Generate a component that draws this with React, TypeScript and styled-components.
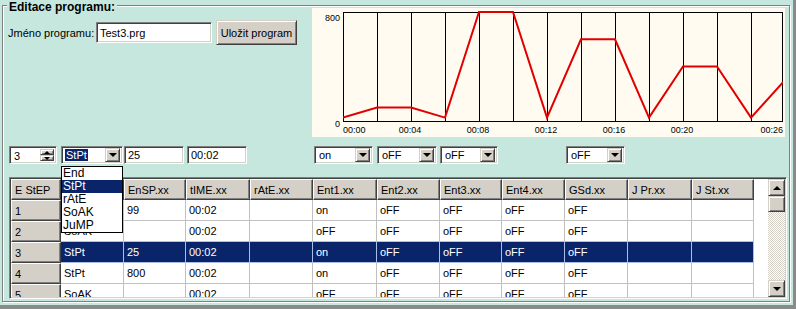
import React from "react";
import styled, { createGlobalStyle, css } from "styled-components";

const MINT = "#c6e7dd";
const FACE = "#d4d0c8";
const NAVY = "#0a246a";

const Global = createGlobalStyle`
  html, body { margin: 0; padding: 0; background: ${MINT}; }
  body { font-family: "Liberation Sans", Arial, sans-serif; font-size: 11px; color: #000; }
  * { box-sizing: border-box; }
`;

const raised = css`
  background: ${FACE};
  border: 1px solid;
  border-color: ${FACE} #404040 #404040 ${FACE};
  box-shadow: inset 1px 1px 0 #fff, inset -1px -1px 0 #808080;
`;

const sunken = css`
  background: #fff;
  border: 1px solid;
  border-color: #808080 #fff #fff #808080;
  box-shadow: inset 1px 1px 0 #404040, inset -1px -1px 0 ${FACE};
`;

const Window = styled.div`
  width: 796px;
  height: 309px;
  background: ${MINT};
  overflow: hidden;
  padding: 5px 0 0 2px;
  border-right: 3px solid #8a8a8a;
  border-bottom: 4px solid #8a8a8a;
`;

const GroupBox = styled.div`
  position: relative;
  width: 788px;
  height: 297px;
  border: 1px solid #808080;
  box-shadow: inset 1px 1px 0 #fff, 1px 1px 0 #fff;
  padding: 2px 0 0 5px;
`;

const GroupTitle = styled.span`
  position: absolute;
  left: 4px;
  top: -5px;
  padding: 0 2px;
  background: ${MINT};
  font-weight: bold;
  font-size: 12px;
  line-height: 13px;
`;

const TopSection = styled.div`
  display: flex;
  height: 130px;
`;

const NamePane = styled.div`
  width: 304px;
  padding-top: 12px;
  display: flex;
  align-items: center;
  align-self: flex-start;
  height: 37px;
`;

const Label = styled.span`
  width: 88px;
  white-space: nowrap;
`;

const TextBox = styled.div<{ $w: number }>`
  ${sunken};
  width: ${(p) => p.$w}px;
  height: ${(p) => (p.$w > 100 ? 21 : 18)}px;
  padding: 0 3px;
  display: flex;
  align-items: center;
  white-space: nowrap;
  overflow: hidden;
`;

const Button = styled.div`
  ${raised};
  margin-left: 4px;
  width: 81px;
  height: 25px;
  display: flex;
  align-items: center;
  justify-content: center;
  white-space: nowrap;
`;

const ChartPanel = styled.div`
  width: 473px;
  height: 129px;
  background: #fffbf0;
`;

const COLS = "50px 63px 62px 64px 63px 64px 63px 62px 63px 63px 64px 62px";

const ControlsRow = styled.div`
  position: relative;
  margin-top: 8px;
  margin-left: 1px;
  height: 18px;
  display: grid;
  grid-template-columns: 52px 63px 62px 64px 63px 64px 63px 62px 63px 63px 64px 62px;
`;

const Cell = styled.div<{ $col: number; $shift?: number }>`
  grid-column: ${(p) => p.$col};
  margin-left: ${(p) => p.$shift ?? 0}px;
  position: relative;
`;

const Combo = styled.div<{ $w: number }>`
  ${sunken};
  width: ${(p) => p.$w}px;
  height: 18px;
  display: flex;
  align-items: center;
  padding: 2px;
`;

const ComboText = styled.span<{ $sel?: boolean }>`
  flex: 1;
  white-space: nowrap;
  overflow: hidden;
  padding-left: 1px;
  span {
    padding: 0 1px;
    ${(p) => p.$sel && css`background: ${NAVY}; color: #fff;`}
  }
`;

const ArrowBtn = styled.div`
  ${raised};
  width: 15px;
  height: 14px;
  display: flex;
  align-items: center;
  justify-content: center;
  flex-shrink: 0;
`;

const Tri = styled.div<{ $up?: boolean; $s?: number }>`
  width: 0;
  height: 0;
  border-left: ${(p) => p.$s ?? 4}px solid transparent;
  border-right: ${(p) => p.$s ?? 4}px solid transparent;
  ${(p) =>
    p.$up
      ? css`border-bottom: ${p.$s ?? 4}px solid #000;`
      : css`border-top: ${p.$s ?? 4}px solid #000;`}
`;

const Spinner = styled.div`
  ${sunken};
  width: 48px;
  height: 18px;
  display: flex;
  align-items: stretch;
  padding: 2px 2px 2px 4px;
`;

const SpinText = styled.span`
  flex: 1;
  line-height: 14px;
`;

const SpinBtns = styled.div`
  display: flex;
  flex-direction: column;
  width: 14px;
`;

const SpinBtn = styled.div`
  ${raised};
  flex: 1;
  display: flex;
  align-items: center;
  justify-content: center;
`;

const DropList = styled.div`
  position: absolute;
  left: 0;
  top: 20px;
  width: 62px;
  background: #fff;
  border: 1px solid #000;
  z-index: 5;
  font-size: 12px;
`;

const DropItem = styled.div<{ $sel?: boolean }>`
  height: 13px;
  line-height: 13px;
  padding-left: 1px;
  ${(p) => p.$sel && css`background: ${NAVY}; color: #fff;`}
`;

const TableFrame = styled.div`
  margin-top: 13px;
  margin-left: 1px;
  width: 778px;
  height: 122px;
  border: 1px solid;
  border-color: #808080 #fff #fff #808080;
  box-shadow: inset 1px 1px 0 #404040, inset -1px -1px 0 ${FACE};
  padding: 1px;
  display: flex;
  background: #fff;
`;

const GridArea = styled.div`
  flex: 1;
  overflow: hidden;
`;

const Row = styled.div`
  display: grid;
  grid-template-columns: ${COLS};
  height: 21px;
`;

const HeadCell = styled.div`
  ${raised};
  border-color: #fff #404040 #404040 #fff;
  box-shadow: inset -1px -1px 0 #808080;
  padding-left: 3px;
  display: flex;
  align-items: center;
  white-space: nowrap;
`;

const DataCell = styled.div<{ $sel?: boolean }>`
  border-right: 1px solid ${(p) => (p.$sel ? "#a9bde6" : "#c0c0c0")};
  border-bottom: 1px solid ${(p) => (p.$sel ? "#a9bde6" : "#c0c0c0")};
  background: ${(p) => (p.$sel ? NAVY : "#fff")};
  color: ${(p) => (p.$sel ? "#fff" : "#000")};
  padding-left: 3px;
  display: flex;
  align-items: center;
  white-space: nowrap;
`;

const ScrollBar = styled.div`
  width: 17px;
  margin-left: auto;
  display: flex;
  flex-direction: column;
  background-color: #fff;
  background-image: conic-gradient(${FACE} 25%, #fff 0 50%, ${FACE} 0 75%, #fff 0);
  background-size: 2px 2px;
`;

const ScrollBtn = styled.div`
  ${raised};
  height: 17px;
  display: flex;
  align-items: center;
  justify-content: center;
`;

const Thumb = styled.div`
  ${raised};
  height: 16px;
`;

const Spacer = styled.div`
  flex: 1;
`;

/* ---------- Chart ---------- */
const PL = 31;
const PR = 471;
const PT = 4;
const PB = 113;
const xOf = (m: number) => PL + m * 17;
const yOf = (v: number) => PB - (v / 800) * 109;
const profile: [number, number][] = [
  [0, 25], [2, 99], [4, 99], [6, 25], [8, 800], [10, 800], [12, 25],
  [14, 600], [16, 600], [18, 25], [20, 400], [22, 400], [24, 25], [26, 300],
];

function Chart() {
  const grid: number[] = [];
  for (let i = 1; i <= 13; i++) {
    const x = PL + i * 34;
    if (x < PR) grid.push(x);
  }
  const pts = profile.map(([m, v]) => `${xOf(m)},${yOf(v)}`).join(" ");
  const labels = [4, 8, 12, 16, 20];
  return (
    <svg width="473" height="129" viewBox="0 0 473 129">
      <defs>
        <clipPath id="plot">
          <rect x={PL} y={PT - 2} width={PR - PL} height={PB - PT + 4} />
        </clipPath>
      </defs>
      {grid.map((x) => (
        <line key={x} x1={x + 0.5} x2={x + 0.5} y1={PT} y2={PB} stroke="#000" strokeWidth="1" />
      ))}
      <rect x={PL + 0.5} y={PT + 0.5} width={PR - PL - 1} height={PB - PT} fill="none" stroke="#000" />
      <polyline points={pts} fill="none" stroke="#e00000" strokeWidth="2" clipPath="url(#plot)" />
      <g fontFamily="Liberation Sans, Arial, sans-serif" fontSize="9" fill="#000">
        <text x="28" y="13" textAnchor="end">800</text>
        <text x="28" y="119" textAnchor="end">0</text>
        <text x={PL} y="125">00:00</text>
        {labels.map((m) => (
          <text key={m} x={xOf(m) - 1} y="125" textAnchor="middle">
            {`00:${String(m).padStart(2, "0")}`}
          </text>
        ))}
        <text x={PR} y="125" textAnchor="end">00:26</text>
      </g>
    </svg>
  );
}

/* ---------- Data ---------- */
const headers = [
  "E StEP", "StEP.xx", "EnSP.xx", "tIME.xx", "rAtE.xx", "Ent1.xx",
  "Ent2.xx", "Ent3.xx", "Ent4.xx", "GSd.xx", "J Pr.xx", "J St.xx",
];

type StepRow = { n: number; type: string; sp: string; t: string; e: string[]; sel?: boolean };

const rows: StepRow[] = [
  { n: 1, type: "StPt", sp: "99", t: "00:02", e: ["on", "oFF", "oFF", "oFF", "oFF"] },
  { n: 2, type: "SoAK", sp: "", t: "00:02", e: ["oFF", "oFF", "oFF", "oFF", "oFF"] },
  { n: 3, type: "StPt", sp: "25", t: "00:02", e: ["on", "oFF", "oFF", "oFF", "oFF"], sel: true },
  { n: 4, type: "StPt", sp: "800", t: "00:02", e: ["on", "oFF", "oFF", "oFF", "oFF"] },
  { n: 5, type: "SoAK", sp: "", t: "00:02", e: ["oFF", "oFF", "oFF", "oFF", "oFF"] },
];

const stepTypes = ["End", "StPt", "rAtE", "SoAK", "JuMP"];

function ComboBox({ w, value, sel }: { w: number; value: string; sel?: boolean }) {
  return (
    <Combo $w={w}>
      <ComboText $sel={sel}>
        <span>{value}</span>
      </ComboText>
      <ArrowBtn>
        <Tri $s={4} />
      </ArrowBtn>
    </Combo>
  );
}

export default function App() {
  return (
    <>
      <Global />
      <Window>
        <GroupBox>
          <GroupTitle>Editace programu:</GroupTitle>
          <TopSection>
            <NamePane>
              <Label>Jméno programu:</Label>
              <TextBox $w={116}>Test3.prg</TextBox>
              <Button>Uložit program</Button>
            </NamePane>
            <ChartPanel>
              <Chart />
            </ChartPanel>
          </TopSection>

          <ControlsRow>
            <Cell $col={1}>
              <Spinner>
                <SpinText>3</SpinText>
                <SpinBtns>
                  <SpinBtn><Tri $up $s={3} /></SpinBtn>
                  <SpinBtn><Tri $s={3} /></SpinBtn>
                </SpinBtns>
              </Spinner>
            </Cell>
            <Cell $col={2}>
              <ComboBox w={62} value="StPt" sel />
              <DropList>
                {stepTypes.map((s) => (
                  <DropItem key={s} $sel={s === "StPt"}>{s}</DropItem>
                ))}
              </DropList>
            </Cell>
            <Cell $col={3}>
              <TextBox $w={60}>25</TextBox>
            </Cell>
            <Cell $col={4} $shift={1}>
              <TextBox $w={60}>00:02</TextBox>
            </Cell>
            <Cell $col={6} $shift={1}>
              <ComboBox w={59} value="on" />
            </Cell>
            <Cell $col={7}>
              <ComboBox w={60} value="oFF" />
            </Cell>
            <Cell $col={8}>
              <ComboBox w={58} value="oFF" />
            </Cell>
            <Cell $col={10} $shift={1}>
              <ComboBox w={59} value="oFF" />
            </Cell>
          </ControlsRow>

          <TableFrame>
            <GridArea>
              <Row>
                {headers.map((h) => (
                  <HeadCell key={h}>{h}</HeadCell>
                ))}
              </Row>
              {rows.map((r) => (
                <Row key={r.n}>
                  <HeadCell>{r.n}</HeadCell>
                  <DataCell $sel={r.sel}>{r.type}</DataCell>
                  <DataCell $sel={r.sel}>{r.sp}</DataCell>
                  <DataCell $sel={r.sel}>{r.t}</DataCell>
                  <DataCell $sel={r.sel}></DataCell>
                  {r.e.map((v, i) => (
                    <DataCell key={i} $sel={r.sel}>{v}</DataCell>
                  ))}
                  <DataCell $sel={r.sel}></DataCell>
                  <DataCell $sel={r.sel}></DataCell>
                </Row>
              ))}
            </GridArea>
            <ScrollBar>
              <ScrollBtn><Tri $up $s={4} /></ScrollBtn>
              <Thumb />
              <Spacer />
              <ScrollBtn><Tri $s={4} /></ScrollBtn>
            </ScrollBar>
          </TableFrame>
        </GroupBox>
      </Window>
    </>
  );
}
